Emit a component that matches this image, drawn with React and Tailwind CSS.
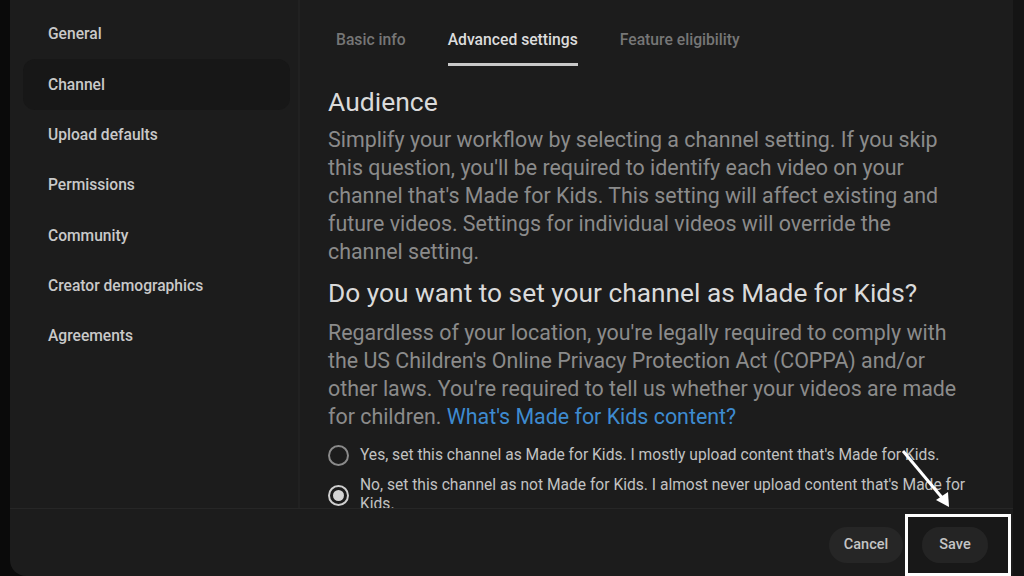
import React from "react";

const navItems = [
  "General",
  "Channel",
  "Upload defaults",
  "Permissions",
  "Community",
  "Creator demographics",
  "Agreements",
];

const tabs = ["Basic info", "Advanced settings", "Feature eligibility"];

const Radio = ({ checked }) => (
  <span
    className={`shrink-0 w-[21px] h-[21px] rounded-full border-2 flex items-center justify-center ${
      checked ? "border-[#cfcfcf]" : "border-[#8a8a8a]"
    }`}
  >
    {checked && <span className="w-[11px] h-[11px] rounded-full bg-[#d4d4d4]" />}
  </span>
);

export default function App() {
  return (
    <div
      className="relative flex h-screen w-full overflow-hidden bg-[#0b0b0b]"
      style={{ fontFamily: "Roboto, 'Liberation Sans', sans-serif" }}
    >
      {/* left dark edge */}
      <div className="w-[10px] shrink-0 bg-[#0a0a0a]" />

      {/* main dialog */}
      <div className="flex-1 flex flex-col bg-[#1c1c1c] rounded-bl-2xl overflow-hidden">
        <div className="flex-1 flex min-h-0">
          {/* sidebar */}
          <nav className="w-[290px] shrink-0 border-r-2 border-[#212121] pt-[9px] pl-[13px] pr-[8px]">
            {navItems.map((item) => (
              <div
                key={item}
                className={`h-[50.3px] flex items-center pl-[25px] pt-[2px] rounded-xl text-[15.6px] font-medium text-[#c9c9c9] ${
                  item === "Channel" ? "bg-[#171717]" : ""
                }`}
              >
                {item}
              </div>
            ))}
          </nav>

          {/* content */}
          <div className="flex-1 min-w-0 pl-[28px] overflow-hidden">
            <div className="flex gap-[42px] ml-[8px] pt-[30px]">
              {tabs.map((tab) => (
                <div
                  key={tab}
                  className={`pb-[13px] border-b-[3px] text-[15.7px] font-medium leading-[20px] ${
                    tab === "Advanced settings"
                      ? "text-[#dcdcdc] border-[#c8c8c8]"
                      : "text-[#767676] border-transparent"
                  }`}
                >
                  {tab}
                </div>
              ))}
            </div>

            <div className="w-[632px]">
              <h2 className="mt-[20px] text-[26.5px] leading-[32px] text-[#dadada]">Audience</h2>
              <p className="mt-[8px] text-[21.4px] leading-[28px] text-[#8b8b8b]">
                Simplify your workflow by selecting a channel setting. If you skip this question,
                you'll be required to identify each video on your channel that's Made for Kids. This
                setting will affect existing and future videos. Settings for individual videos will
                override the channel setting.
              </p>

              <h2 className="mt-[11px] text-[26.3px] leading-[32px] text-[#dadada] whitespace-nowrap">
                Do you want to set your channel as Made for Kids?
              </h2>
              <p className="mt-[10px] text-[21.4px] leading-[28px] text-[#8b8b8b]">
                Regardless of your location, you're legally required to comply with the US
                Children's Online Privacy Protection Act (COPPA) and/or other laws. You're required
                to tell us whether your videos are made for children.{" "}
                <span className="text-[#3e8bd0]">What's Made for Kids content?</span>
              </p>
            </div>

            <div className="mt-[14px] flex flex-col gap-[10px] w-[652px]">
              <label className="flex items-center gap-[11px]">
                <Radio />
                <span className="text-[15.6px] leading-[19px] text-[#c2c2c2]">
                  Yes, set this channel as Made for Kids. I mostly upload content that's Made for Kids.
                </span>
              </label>
              <label className="flex items-center gap-[11px]">
                <Radio checked />
                <span className="text-[15.6px] leading-[19px] text-[#c2c2c2]">
                  No, set this channel as not Made for Kids. I almost never upload content that's Made
                  for Kids.
                </span>
              </label>
            </div>
          </div>
        </div>

        {/* footer */}
        <div className="h-[68px] shrink-0 border-t border-[#262626] flex items-center justify-end gap-[19px] pr-[25px] pt-[4px]">
          <button className="h-[36px] w-[74px] rounded-full bg-[#262626] text-[14.5px] font-medium text-[#c4c4c4]">
            Cancel
          </button>
          <button className="h-[36px] w-[66px] rounded-full bg-[#262626] text-[14.5px] font-medium text-[#c4c4c4]">
            Save
          </button>
        </div>
      </div>

      {/* right dark edge */}
      <div className="w-[11px] shrink-0 bg-[#141414]" />

      {/* annotation: highlight box + arrow */}
      <div className="absolute left-[905px] top-[514px] w-[106px] h-[62px] border-[3px] border-white bg-[#151515]/40" />
      <div className="absolute left-[922px] top-[527px] w-[66px] h-[36px] rounded-full bg-[#242424] flex items-center justify-center text-[14.5px] font-medium text-[#c4c4c4]">
        Save
      </div>
      <svg className="absolute left-0 top-0 pointer-events-none" width="1024" height="576">
        <line x1="903" y1="451" x2="944" y2="500" stroke="white" strokeWidth="3" />
        <path d="M949 507 L936 500 L948 492 Z" fill="white" />
      </svg>
    </div>
  );
}
